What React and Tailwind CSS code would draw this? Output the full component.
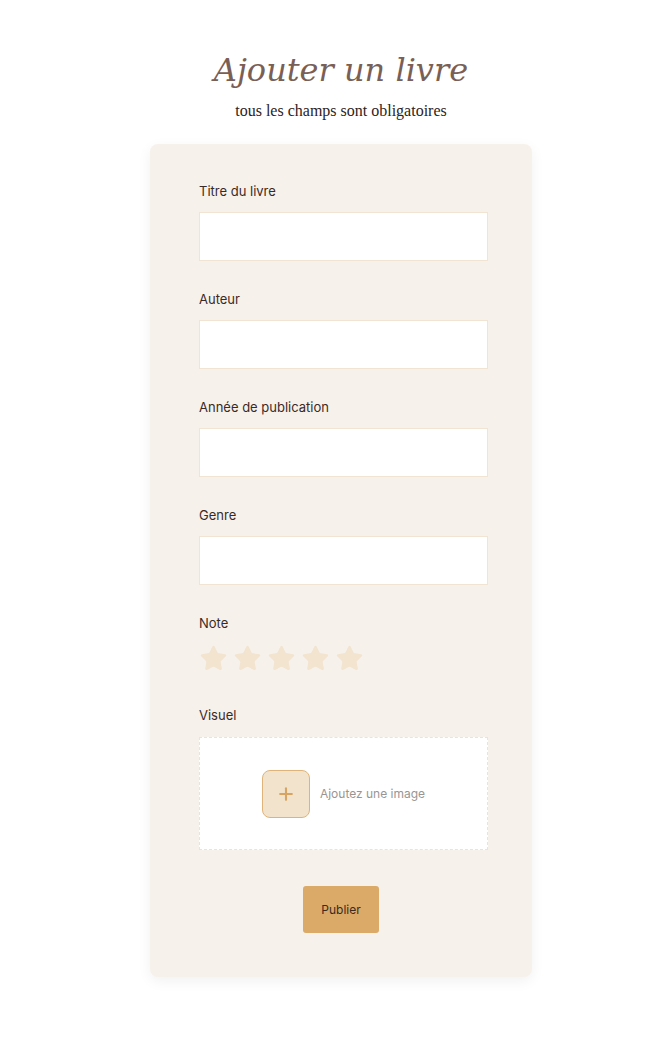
import { Plus, Star } from 'lucide-react';

const sans = { fontFamily: 'Inter, "Noto Sans", sans-serif' };
const titleFont = { fontFamily: '"DejaVu Serif", "Liberation Serif", serif' };
const subFont = { fontFamily: '"Liberation Serif", "DejaVu Serif", serif' };

function Field({ label }) {
  return (
    <div className="mb-[29px]">
      <p className="mb-[12px] text-[13px] leading-[18px] text-[#3a2a26]">{label}</p>
      <div className="h-[49px] w-[289px] border border-[#f1e4d3] bg-white" />
    </div>
  );
}

export default function App() {
  return (
    <div className="min-h-[1038px] bg-white" style={sans}>
      <div className="ml-[150px] w-[382px] pt-[46px]">
        <h1 className="text-center text-[32px] italic leading-[48px] text-[#7a5f56]" style={titleFont}>
          Ajouter un livre
        </h1>
        <p className="mt-[8px] text-center text-[16px] leading-[18px] text-[#2e2220]" style={subFont}>
          tous les champs sont obligatoires
        </p>

        <div className="mt-[24px] rounded-[8px] bg-[#f7f1eb] px-[49px] pt-[38px] pb-[44px] shadow-[0_4px_14px_rgba(0,0,0,0.06)]">
          <Field label="Titre du livre" />
          <Field label="Auteur" />
          <Field label="Année de publication" />
          <Field label="Genre" />

          <div>
            <p className="text-[13px] leading-[18px] text-[#3a2a26]">Note</p>
            <div className="mt-[12px] flex gap-[5px]">
              {Array.from({ length: 5 }).map((_, i) => (
                <Star key={i} className="h-[29px] w-[29px] fill-[#f2e4cf] text-[#f2e4cf]" strokeWidth={1} />
              ))}
            </div>
          </div>

          <div className="mt-[33px]">
            <p className="text-[13px] leading-[18px] text-[#3a2a26]">Visuel</p>
            <div className="mt-[13px] flex h-[113px] w-[289px] items-center justify-center gap-[10px] border border-dashed border-[#f1e2cc] bg-white">
              <div className="flex h-[48px] w-[48px] items-center justify-center rounded-[8px] border border-[#dfb47b] bg-[#f2e3cd]">
                <Plus className="h-[20px] w-[20px] text-[#d8a461]" strokeWidth={2.5} />
              </div>
              <span className="text-[12px] text-[#9a9592]">Ajoutez une image</span>
            </div>
          </div>

          <div className="mt-[36px] flex justify-center">
            <button className="h-[47px] w-[76px] rounded-[3px] bg-[#dbaa68] text-[12px] text-[#3a2a20]">
              Publier
            </button>
          </div>
        </div>
      </div>
    </div>
  );
}
